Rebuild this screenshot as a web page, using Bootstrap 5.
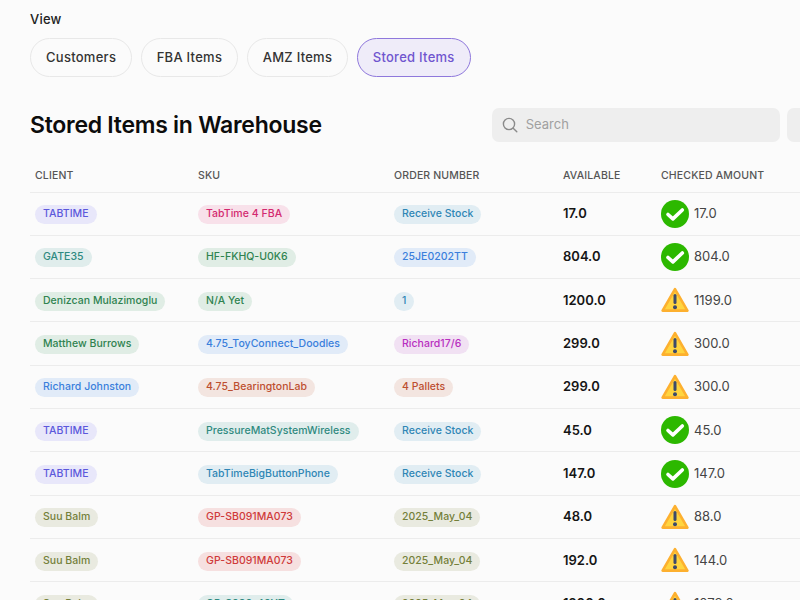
<!DOCTYPE html>
<html lang="en">
<head>
<meta charset="utf-8">
<title>Stored Items</title>
<link href="https://cdn.jsdelivr.net/npm/bootstrap@5.3.0/dist/css/bootstrap.min.css" rel="stylesheet">
<style>
html,body{height:600px;overflow:hidden}
body{background:#fbfbfb;font-family:Inter,"Liberation Sans",sans-serif;color:#111;width:800px}
.page-wrap{padding:11px 0 0 30px;width:830px}
.view-label{font-size:13px;font-weight:500;line-height:16px;color:#222;margin-bottom:11px;letter-spacing:.2px}
.tab-strip{gap:8.5px}
.tab-pill{height:39px;border:1px solid #e8e8e8;border-radius:20px;background:#fbfbfb;color:#333;font-size:13px;font-weight:500;padding:0 15px;display:flex;align-items:center;letter-spacing:.27px}
.tab-on{background:#efecf9;border:1.5px solid #8f78dc;color:#6f55cf}
.head-row{margin-top:31px;height:34px}
.page-title{font-size:23px;font-weight:600;margin:0;line-height:34px;color:#0c0c0c;letter-spacing:-.27px}
.search-box{width:288.5px;height:34px;background:#eeeeee;border-radius:7px;margin-left:170px;padding-left:10px;color:#a0a0a0;font-size:13px;gap:8px;flex:none}
.extra-box{width:60px;height:34px;background:#eeeeee;border-radius:7px;margin-left:7px;flex:none}
.stock-table{table-layout:fixed;width:780px;margin:19px 0 0;border-collapse:collapse;--bs-table-bg:transparent}
.stock-table th{font-size:10.5px;font-weight:500;color:#555;padding:0 0 0 5px;height:31px;border-bottom:1px solid #ececec;vertical-align:middle;letter-spacing:.15px}
.stock-table td{height:43.33px;padding:0 0 0 5px;border-bottom:1px solid #ececec;vertical-align:middle;font-size:13px}
.chip{display:inline-block;height:19px;line-height:18px;border-radius:10px;padding:0 8px;font-size:10.5px;font-weight:500;white-space:nowrap;letter-spacing:.03px}
.c-ind{background:#e8e7fa;color:#5c58dc}.c-pink{background:#f8e1ea;color:#d3296f}.c-sky{background:#e1edf3;color:#2f86b5}
.c-teal{background:#e0edec;color:#2f8a80}.c-green{background:#e0ede5;color:#2f8350}.c-blue{background:#e1ebf8;color:#3b7fdc}
.c-mag{background:#f1e1f3;color:#b82fc0}.c-rust{background:#f3e5e0;color:#bd4f30}.c-olive{background:#e9eae0;color:#74803a}.c-red{background:#f6e0e0;color:#cf3a3a}
.avail{font-weight:600;color:#151515}
.checked{gap:5px;color:#444}
.checked svg{flex:none;display:block}
</style>
</head>
<body>
<svg width="0" height="0" class="position-absolute">
<defs>
<symbol id="okay" viewBox="0 0 28 28"><circle cx="14" cy="14" r="14" fill="#2cb800"/><path d="M7 14.5l4.9 4.4L21.3 10" fill="none" stroke="#fff" stroke-width="3.6" stroke-linecap="round" stroke-linejoin="round"/></symbol>
<symbol id="warn" viewBox="0 0 28 26"><path d="M14 2.2 L26.4 23.6 H1.6Z" fill="#ffd53f" stroke="#fdb02f" stroke-width="2.6" stroke-linejoin="round"/><rect x="12.5" y="7" width="3" height="10" rx="1.5" fill="#3d4a6b"/><circle cx="14" cy="20.2" r="2" fill="#3d4a6b"/></symbol>
</defs>
</svg>
<div class="page-wrap">
<div class="view-label">View</div>
<div class="d-flex tab-strip">
<div class="tab-pill">Customers</div>
<div class="tab-pill">FBA Items</div>
<div class="tab-pill">AMZ Items</div>
<div class="tab-pill tab-on">Stored Items</div>
</div>
<div class="d-flex head-row align-items-center">
<h1 class="page-title flex-shrink-0">Stored Items in Warehouse</h1>
<div class="search-box d-flex align-items-center">
<svg width="16" height="16" viewBox="0 0 16 16" fill="none" stroke="#8a8a8a" stroke-width="1.4" stroke-linecap="round"><circle cx="7" cy="7" r="5.6"/><path d="M11.2 11.2l3.6 3.6"/></svg>
<span>Search</span>
</div>
<div class="extra-box"></div>
</div>
<table class="table stock-table">
<colgroup><col style="width:163px"><col style="width:196px"><col style="width:169px"><col style="width:98px"><col></colgroup>
<thead><tr><th>CLIENT</th><th>SKU</th><th>ORDER NUMBER</th><th>AVAILABLE</th><th>CHECKED AMOUNT</th></tr></thead>
<tbody id="rows">
<tr><td><span class="chip c-ind">TABTIME</span></td><td><span class="chip c-pink">TabTime 4 FBA</span></td><td><span class="chip c-sky">Receive Stock</span></td><td class="avail">17.0</td><td><div class="d-flex align-items-center checked"><svg width="28" height="28"><use href="#okay"/></svg>17.0</div></td></tr>
<tr><td><span class="chip c-teal">GATE35</span></td><td><span class="chip c-green">HF-FKHQ-U0K6</span></td><td><span class="chip c-blue">25JE0202TT</span></td><td class="avail">804.0</td><td><div class="d-flex align-items-center checked"><svg width="28" height="28"><use href="#okay"/></svg>804.0</div></td></tr>
<tr><td><span class="chip c-green">Denizcan Mulazimoglu</span></td><td><span class="chip c-green">N/A Yet</span></td><td><span class="chip c-sky">1</span></td><td class="avail">1200.0</td><td><div class="d-flex align-items-center checked"><svg width="28" height="26"><use href="#warn"/></svg>1199.0</div></td></tr>
<tr><td><span class="chip c-green">Matthew Burrows</span></td><td><span class="chip c-blue">4.75_ToyConnect_Doodles</span></td><td><span class="chip c-mag">Richard17/6</span></td><td class="avail">299.0</td><td><div class="d-flex align-items-center checked"><svg width="28" height="26"><use href="#warn"/></svg>300.0</div></td></tr>
<tr><td><span class="chip c-blue">Richard Johnston</span></td><td><span class="chip c-rust">4.75_BearingtonLab</span></td><td><span class="chip c-rust">4 Pallets</span></td><td class="avail">299.0</td><td><div class="d-flex align-items-center checked"><svg width="28" height="26"><use href="#warn"/></svg>300.0</div></td></tr>
<tr><td><span class="chip c-ind">TABTIME</span></td><td><span class="chip c-teal">PressureMatSystemWireless</span></td><td><span class="chip c-sky">Receive Stock</span></td><td class="avail">45.0</td><td><div class="d-flex align-items-center checked"><svg width="28" height="28"><use href="#okay"/></svg>45.0</div></td></tr>
<tr><td><span class="chip c-ind">TABTIME</span></td><td><span class="chip c-sky">TabTimeBigButtonPhone</span></td><td><span class="chip c-sky">Receive Stock</span></td><td class="avail">147.0</td><td><div class="d-flex align-items-center checked"><svg width="28" height="28"><use href="#okay"/></svg>147.0</div></td></tr>
<tr><td><span class="chip c-olive">Suu Balm</span></td><td><span class="chip c-red">GP-SB091MA073</span></td><td><span class="chip c-olive">2025_May_04</span></td><td class="avail">48.0</td><td><div class="d-flex align-items-center checked"><svg width="28" height="26"><use href="#warn"/></svg>88.0</div></td></tr>
<tr><td><span class="chip c-olive">Suu Balm</span></td><td><span class="chip c-red">GP-SB091MA073</span></td><td><span class="chip c-olive">2025_May_04</span></td><td class="avail">192.0</td><td><div class="d-flex align-items-center checked"><svg width="28" height="26"><use href="#warn"/></svg>144.0</div></td></tr>
<tr><td><span class="chip c-olive">Suu Balm</span></td><td><span class="chip c-teal">GP-S080-40YT</span></td><td><span class="chip c-olive">2025_May_04</span></td><td class="avail">1200.0</td><td><div class="d-flex align-items-center checked"><svg width="28" height="26"><use href="#warn"/></svg>1078.0</div></td></tr>
</tbody>
</table>
</div>
<script src="https://cdn.jsdelivr.net/npm/bootstrap@5.3.0/dist/js/bootstrap.bundle.min.js"></script>
</body>
</html>
